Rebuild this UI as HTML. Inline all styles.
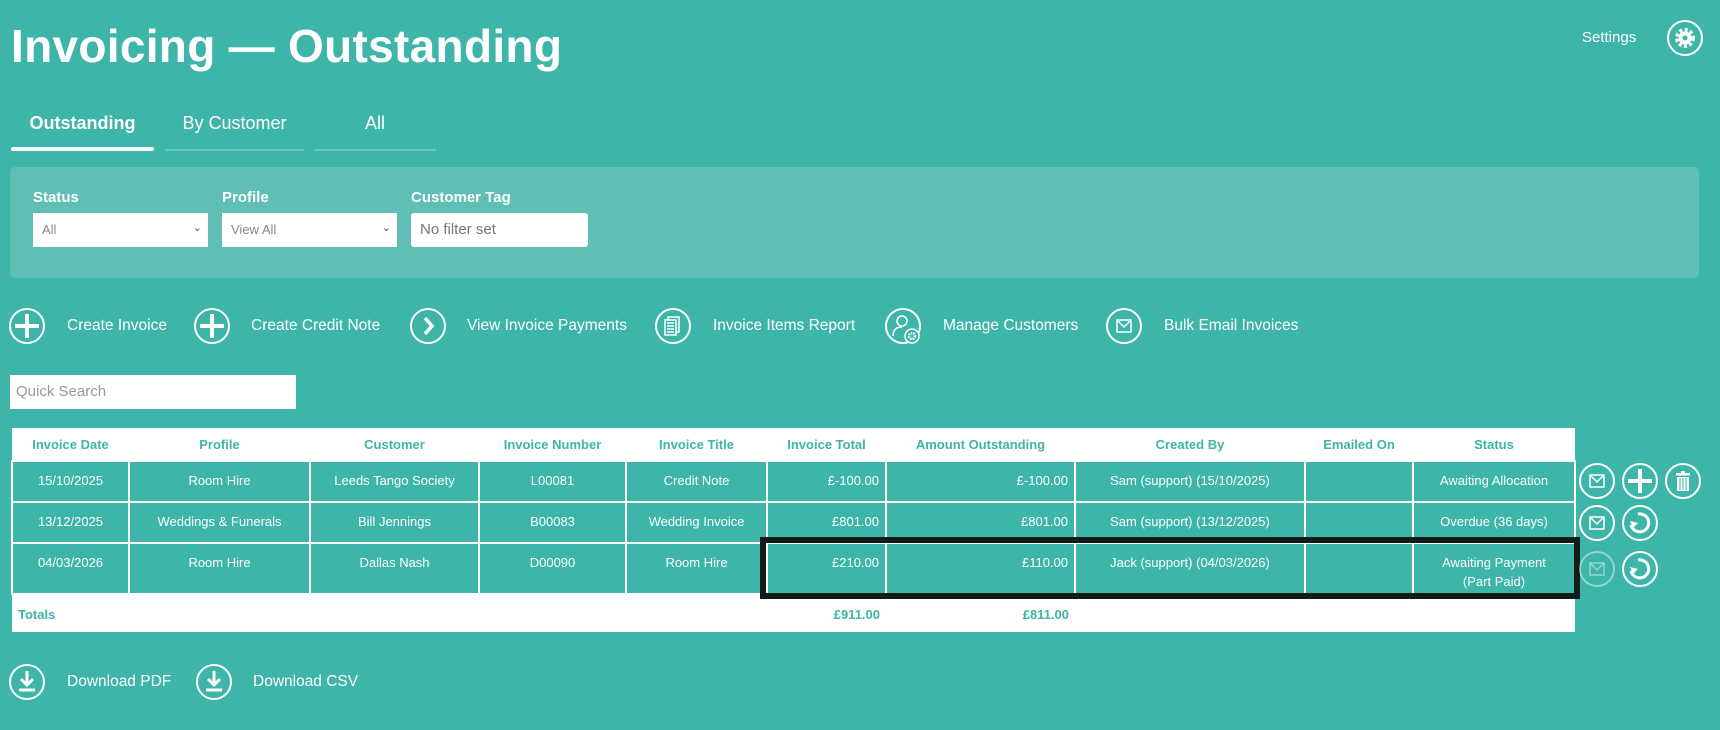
<!DOCTYPE html>
<html><head><meta charset="utf-8"><style>
*{box-sizing:border-box;margin:0;padding:0}
body{width:1720px;height:730px;background:#3db5a9;font-family:"Liberation Sans",sans-serif;color:#fff;position:relative;overflow:hidden}
.a{position:absolute}
h1{position:absolute;left:11px;top:19px;font-size:46px;font-weight:bold;letter-spacing:0.3px}
.tab{position:absolute;top:113px;font-size:18px;text-align:center}
.ul{position:absolute;top:149px;height:2px;background:#6cc6bd}
.panel{position:absolute;left:10px;top:167px;width:1689px;height:111px;background:#5fbfb5;border-radius:5px}
.lbl{position:absolute;top:189px;font-size:15px;font-weight:bold}
.sel{position:absolute;top:213px;height:34px;background:#fff;color:#888;font-size:13px;padding:9px 9px}
.sel span{position:absolute;right:6px;top:8px;color:#555;font-size:11px}
.act{position:absolute;top:317px;font-size:15.5px}
svg.i{position:absolute}
table{position:absolute;left:11px;top:428px;width:1563px;border-collapse:collapse;font-size:13px;table-layout:fixed}
th{background:#fff;color:#3db5a9;height:33px;font-weight:bold;border:none}
td{background:#3db5a9;border:2px solid #fff;text-align:center;vertical-align:top;padding-top:9px;line-height:19px}
td.r{text-align:right;padding-right:6px}
tr.t td{background:#fff;color:#3db5a9;font-weight:bold;border:none;height:38px;padding-top:10px}
.box{position:absolute;left:760px;top:537px;width:820px;height:62px;border:6px solid #101c1a}
</style></head><body>
<h1>Invoicing — Outstanding</h1>
<div class="a" style="left:1582px;top:29px;font-size:15px">Settings</div>
<svg class="i" style="left:1666px;top:19px" width="38" height="38" viewBox="0 0 38 38"><circle cx="19" cy="19" r="17" fill="none" stroke="#fff" stroke-width="2"/><circle cx="19" cy="19" r="8" fill="none" stroke="#fff" stroke-width="4" stroke-dasharray="3 2.3"/><circle cx="19" cy="19" r="6.5" fill="#fff"/><circle cx="19" cy="19" r="2.5" fill="#3db5a9"/></svg>
<div class="tab" style="left:11px;width:143px;font-weight:bold">Outstanding</div>
<div class="tab" style="left:165px;width:139px">By Customer</div>
<div class="tab" style="left:314px;width:122px">All</div>
<div class="ul" style="left:11px;width:143px;height:4px;top:147px;background:#fff;border-radius:2px"></div>
<div class="ul" style="left:165px;width:139px"></div>
<div class="ul" style="left:314px;width:122px"></div>
<div class="panel"></div>
<div class="lbl" style="left:33px">Status</div>
<div class="lbl" style="left:222px">Profile</div>
<div class="lbl" style="left:411px">Customer Tag</div>
<div class="sel" style="left:33px;width:175px">All<span>&#8964;</span></div>
<div class="sel" style="left:222px;width:175px">View All<span>&#8964;</span></div>
<div class="sel" style="left:411px;width:177px;border-radius:3px;font-size:15px;color:#777;padding-top:8px">No filter set</div>

<svg class="i" style="left:8px;top:307px" width="38" height="38"><circle cx="19" cy="19" r="17" fill="none" stroke="#fff" stroke-width="2"/><path d="M19 7v24M7 19h24" stroke="#fff" stroke-width="4"/></svg>
<div class="act" style="left:67px">Create Invoice</div>
<svg class="i" style="left:193px;top:307px" width="38" height="38"><circle cx="19" cy="19" r="17" fill="none" stroke="#fff" stroke-width="2"/><path d="M19 7v24M7 19h24" stroke="#fff" stroke-width="4"/></svg>
<div class="act" style="left:251px">Create Credit Note</div>
<svg class="i" style="left:409px;top:307px" width="38" height="38"><circle cx="19" cy="19" r="17" fill="none" stroke="#fff" stroke-width="2"/><path d="M16 11l7 8-7 8" fill="none" stroke="#fff" stroke-width="3.5"/></svg>
<div class="act" style="left:467px">View Invoice Payments</div>
<svg class="i" style="left:654px;top:307px" width="38" height="38"><circle cx="19" cy="19" r="17" fill="none" stroke="#fff" stroke-width="2"/><rect x="14" y="10" width="11" height="15" fill="none" stroke="#fff" stroke-width="1.5"/><rect x="11" y="13" width="11" height="15" fill="#3db5a9" stroke="#fff" stroke-width="1.5"/><path d="M13 16h7M13 19h7M13 22h7M13 25h7" stroke="#fff" stroke-width="1.5"/></svg>
<div class="act" style="left:713px">Invoice Items Report</div>
<svg class="i" style="left:884px;top:307px" width="42" height="42"><circle cx="19" cy="19" r="17" fill="none" stroke="#fff" stroke-width="2"/><circle cx="18" cy="14" r="5" fill="none" stroke="#fff" stroke-width="1.5"/><path d="M9 29c0-7 4-9 9-9" fill="none" stroke="#fff" stroke-width="1.5"/><circle cx="28" cy="29" r="7" fill="#3db5a9" stroke="#fff" stroke-width="1.5"/><circle cx="28" cy="29" r="3" fill="none" stroke="#fff" stroke-width="2.5" stroke-dasharray="1.5 1"/></svg>
<div class="act" style="left:943px">Manage Customers</div>
<svg class="i" style="left:1105px;top:307px" width="38" height="38"><circle cx="19" cy="19" r="17" fill="none" stroke="#fff" stroke-width="2"/><rect x="12" y="13" width="14" height="12" fill="none" stroke="#fff" stroke-width="1.5"/><path d="M12 13l7 7 7-7" fill="none" stroke="#fff" stroke-width="1.5"/></svg>
<div class="act" style="left:1164px">Bulk Email Invoices</div>

<div class="a" style="left:10px;top:375px;width:286px;height:34px;background:#fff;color:#999;font-size:15px;padding:8px 6px">Quick Search</div>

<table>
<colgroup><col style="width:117px"><col style="width:181px"><col style="width:169px"><col style="width:147px"><col style="width:141px"><col style="width:119px"><col style="width:189px"><col style="width:230px"><col style="width:108px"><col style="width:162px"></colgroup>
<tr><th>Invoice Date</th><th>Profile</th><th>Customer</th><th>Invoice Number</th><th>Invoice Title</th><th>Invoice Total</th><th>Amount Outstanding</th><th>Created By</th><th>Emailed On</th><th>Status</th></tr>
<tr style="height:41px"><td>15/10/2025</td><td>Room Hire</td><td>Leeds Tango Society</td><td>L00081</td><td>Credit Note</td><td class="r">£-100.00</td><td class="r">£-100.00</td><td>Sam (support) (15/10/2025)</td><td></td><td>Awaiting Allocation</td></tr>
<tr style="height:41px"><td>13/12/2025</td><td>Weddings &amp; Funerals</td><td>Bill Jennings</td><td>B00083</td><td>Wedding Invoice</td><td class="r">£801.00</td><td class="r">£801.00</td><td>Sam (support) (13/12/2025)</td><td></td><td>Overdue (36 days)</td></tr>
<tr style="height:51px"><td>04/03/2026</td><td>Room Hire</td><td>Dallas Nash</td><td>D00090</td><td>Room Hire</td><td class="r">£210.00</td><td class="r">£110.00</td><td>Jack (support) (04/03/2026)</td><td></td><td>Awaiting Payment<br>(Part Paid)</td></tr>
<tr class="t"><td style="text-align:left;padding-left:6px">Totals</td><td></td><td></td><td></td><td></td><td class="r">£911.00</td><td class="r">£811.00</td><td></td><td></td><td></td></tr>
</table>
<div class="box"></div>

<svg class="i" style="left:1578px;top:462px" width="38" height="38"><circle cx="19" cy="19" r="17" fill="none" stroke="#fff" stroke-width="2"/><rect x="12" y="13" width="14" height="12" fill="none" stroke="#fff" stroke-width="1.5"/><path d="M12 13l7 7 7-7" fill="none" stroke="#fff" stroke-width="1.5"/></svg>
<svg class="i" style="left:1621px;top:462px" width="38" height="38"><circle cx="19" cy="19" r="17" fill="none" stroke="#fff" stroke-width="2"/><path d="M19 7v24M7 19h24" stroke="#fff" stroke-width="4"/></svg>
<svg class="i" style="left:1664px;top:462px" width="38" height="38"><circle cx="19" cy="19" r="17" fill="none" stroke="#fff" stroke-width="2"/><rect x="12" y="11" width="14" height="2.5" fill="#fff"/><rect x="17" y="9" width="4" height="2" fill="#fff"/><rect x="13" y="15" width="12" height="14" fill="#fff"/><path d="M16 16v12M19 16v12M22 16v12" stroke="#3db5a9" stroke-width="1"/></svg>
<svg class="i" style="left:1578px;top:504px" width="38" height="38"><circle cx="19" cy="19" r="17" fill="none" stroke="#fff" stroke-width="2"/><rect x="12" y="13" width="14" height="12" fill="none" stroke="#fff" stroke-width="1.5"/><path d="M12 13l7 7 7-7" fill="none" stroke="#fff" stroke-width="1.5"/></svg>
<svg class="i" style="left:1621px;top:504px" width="38" height="38"><circle cx="19" cy="19" r="17" fill="none" stroke="#fff" stroke-width="2"/><path d="M17 10a9 9 0 1 1-7 11" fill="none" stroke="#fff" stroke-width="3"/><path d="M9 17l3 7 5-5z" fill="#fff"/></svg>
<svg class="i" style="left:1578px;top:550px;opacity:.45" width="38" height="38"><circle cx="19" cy="19" r="17" fill="none" stroke="#fff" stroke-width="2"/><rect x="12" y="13" width="14" height="12" fill="none" stroke="#fff" stroke-width="1.5"/><path d="M12 13l7 7 7-7" fill="none" stroke="#fff" stroke-width="1.5"/></svg>
<svg class="i" style="left:1621px;top:550px" width="38" height="38"><circle cx="19" cy="19" r="17" fill="none" stroke="#fff" stroke-width="2"/><path d="M17 10a9 9 0 1 1-7 11" fill="none" stroke="#fff" stroke-width="3"/><path d="M9 17l3 7 5-5z" fill="#fff"/></svg>

<svg class="i" style="left:8px;top:663px" width="38" height="38"><circle cx="19" cy="19" r="17" fill="none" stroke="#fff" stroke-width="2"/><path d="M19 8v13M13 16l6 6 6-6" fill="none" stroke="#fff" stroke-width="3"/><path d="M11 27h16" stroke="#fff" stroke-width="3"/></svg>
<div class="act" style="left:67px;top:673px">Download PDF</div>
<svg class="i" style="left:195px;top:663px" width="38" height="38"><circle cx="19" cy="19" r="17" fill="none" stroke="#fff" stroke-width="2"/><path d="M19 8v13M13 16l6 6 6-6" fill="none" stroke="#fff" stroke-width="3"/><path d="M11 27h16" stroke="#fff" stroke-width="3"/></svg>
<div class="act" style="left:253px;top:673px">Download CSV</div>
</body></html>
